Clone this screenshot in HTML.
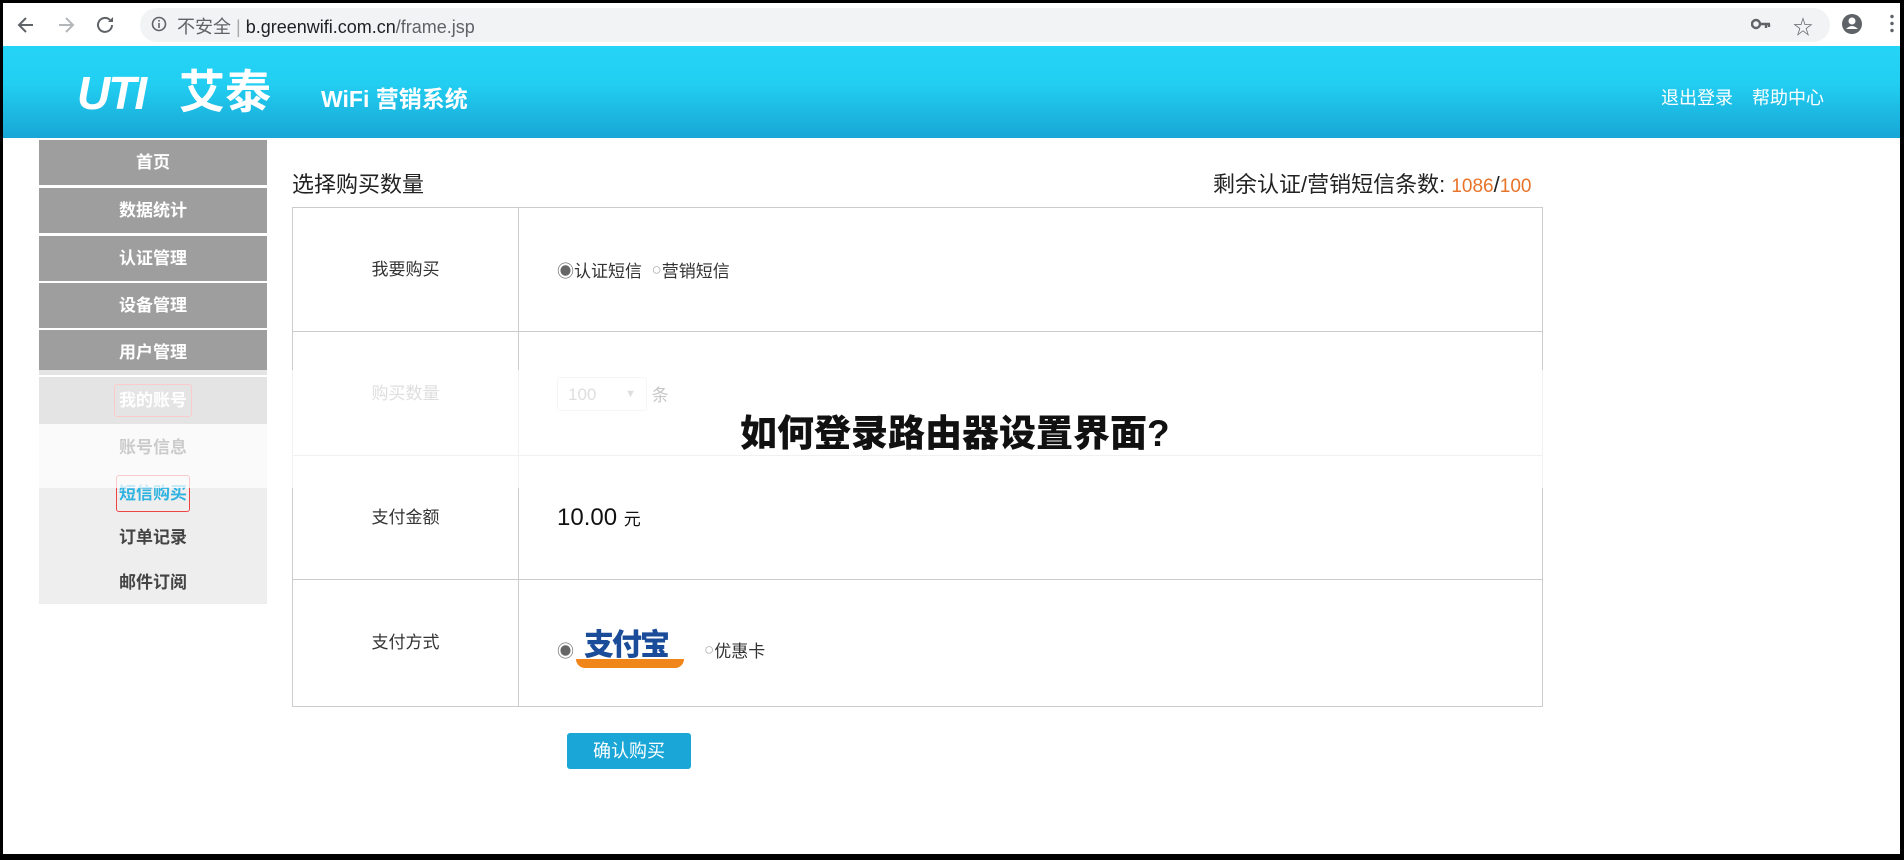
<!DOCTYPE html>
<html><head><meta charset="utf-8"><style>
*{margin:0;padding:0;box-sizing:border-box}
body{width:1904px;height:860px;overflow:hidden;background:#000;font-family:"Liberation Sans","Noto Sans CJK SC",sans-serif;position:relative}
#win{position:absolute;left:3px;top:3px;width:1897px;height:851px;background:#fff;overflow:hidden}
.abs{position:absolute}
#bar{left:0;top:0;width:1897px;height:43px;background:#fff}
#url{left:137px;top:5px;width:1690px;height:34px;border-radius:17px;background:#f1f3f4}
#hdr{left:0;top:43px;width:1897px;height:92px;background:linear-gradient(#24d4f6 0%,#22cff2 40%,#18a6d6 100%)}
.side{position:absolute;left:36px;width:228px;height:45px;background:#9e9e9e;color:#fff;font-weight:bold;font-size:17px;text-align:center;line-height:45px}
.sub{position:absolute;left:36px;width:228px;height:45px;color:#444;font-weight:bold;font-size:17px;text-align:center;line-height:45px}
.row{position:absolute;left:289px;width:1251px;height:125px;border:1px solid #ccc;font-size:17px;color:#333}
.lab{position:absolute;left:0;top:0;width:226px;height:123px;border-right:1px solid #ccc;text-align:center;line-height:123px}
.val{position:absolute;left:264px;top:0;height:123px;display:flex;align-items:center}
</style></head><body>
<div id="win">
<div id="bar" class="abs">
 <svg class="abs" style="left:14px;top:11px" width="110" height="22" viewBox="0 0 110 22"><path d="M16 11H3M9 4L2 11l7 7" stroke="#5f6368" stroke-width="2" fill="none"/><path d="M42 11h13M49 4l7 7-7 7" stroke="#b4b7ba" stroke-width="2" fill="none"/><path d="M93 6a7 7 0 1 0 2 5" stroke="#5f6368" stroke-width="2" fill="none"/><path d="M96 3v5h-5z" fill="#5f6368"/></svg>
 <div id="url" class="abs"></div>
 <svg class="abs" style="left:148px;top:13px" width="16" height="16"><circle cx="8" cy="8" r="6.5" stroke="#5f6368" stroke-width="1.6" fill="none"/><rect x="7.2" y="7" width="1.6" height="5" fill="#5f6368"/><rect x="7.2" y="4" width="1.6" height="1.6" fill="#5f6368"/></svg>
 <div class="abs" style="left:174px;top:10px;font-size:18px;color:#5f6368">不安全 <span style="color:#aaa">|</span> <span style="color:#202124">b.greenwifi.com.cn</span>/frame.jsp</div>
 <svg class="abs" style="left:1748px;top:15px" width="20" height="12"><circle cx="5" cy="6" r="4" stroke="#5f6368" stroke-width="2.4" fill="none"/><path d="M9 6h10M15 6v4M18 6v3" stroke="#5f6368" stroke-width="2.4"/></svg>
 <div class="abs" style="left:1790px;top:8px;font-size:20px;color:#5f6368">☆</div>
 <svg class="abs" style="left:1838px;top:10px" width="22" height="22"><circle cx="11" cy="11" r="10" fill="#5f6368"/><circle cx="11" cy="8" r="3.5" fill="#fff"/><path d="M5 16q6-6 12 0" fill="#fff"/></svg>
 <div class="abs" style="left:1887px;top:10px;width:4px;height:20px;background:radial-gradient(circle,#5f6368 1.5px,transparent 2px) 0 0/4px 7px"></div>
</div>
<div id="hdr" class="abs">
 <div class="abs" style="left:74px;top:24px;font-size:46px;font-weight:900;color:#fff;font-style:italic;letter-spacing:-2px;line-height:46px">UTI</div>
 <div class="abs" style="left:176px;top:22px;font-size:46px;font-weight:bold;color:#fff;line-height:48px">艾泰</div>
 <div class="abs" style="left:318px;top:34px;font-size:23px;font-weight:bold;color:#fff">WiFi 营销系统</div>
 <div class="abs" style="left:1658px;top:38px;font-size:18px;color:#fff">退出登录</div>
 <div class="abs" style="left:1749px;top:38px;font-size:18px;color:#fff">帮助中心</div>
</div>
<div class="side" style="top:137px">首页</div>
<div class="side" style="top:185px">数据统计</div>
<div class="side" style="top:233px">认证管理</div>
<div class="side" style="top:280px">设备管理</div>
<div class="side" style="top:327px">用户管理</div>
<div class="side" style="top:374px;height:47px;line-height:47px;background:#9e9e9e"><span style="border:1px solid #e44;border-radius:3px;padding:6px 4px">我的账号</span></div>
<div class="abs" style="left:36px;top:421px;width:228px;height:180px;background:#eee"></div>
<div class="sub" style="top:422px">账号信息</div>
<div class="sub" style="top:468px;color:#2fb3e0"><span style="border:1px solid #e44;border-radius:3px;padding:8px 2px">短信购买</span></div>
<div class="sub" style="top:512px">订单记录</div>
<div class="sub" style="top:557px">邮件订阅</div>
<div class="abs" style="left:289px;top:164px;font-size:22px;color:#222">选择购买数量</div>
<div class="abs" style="left:1210px;top:164px;font-size:22px;color:#222">剩余认证/营销短信条数: <span style="color:#e8742a;font-size:19px">1086</span>/<span style="color:#e8742a;font-size:19px">100</span></div>
<div class="row" style="top:204px"><div class="lab">我要购买</div><div class="val"><span style="color:#666">◉</span>认证短信&nbsp;&nbsp;<span style="color:#aaa">○</span>营销短信</div></div>
<div class="row" style="top:328px"><div class="lab" style="color:#888">购买数量</div><div class="val"><span style="display:inline-block;width:90px;height:34px;border:1px solid #ddd;border-radius:3px;color:#888;padding:7px 10px;font-size:17px">100 <span style="float:right;font-size:11px;margin-top:3px">▼</span></span>&nbsp;条</div></div>
<div class="row" style="top:452px"><div class="lab">支付金额</div><div class="val" style="font-size:24px;color:#111">10.00&nbsp;<span style="font-size:17px">元</span></div></div>
<div class="row" style="top:576px;height:128px"><div class="lab" style="height:126px;line-height:126px">支付方式</div><div class="val" style="top:8px"><span style="color:#666">◉</span><span style="display:inline-block;width:110px;height:46px;position:relative;margin-right:20px"><span style="position:absolute;left:10px;top:0;font-size:30px;font-weight:900;color:#1a4c9a;letter-spacing:-2px;line-height:38px">支付宝</span><span style="position:absolute;left:2px;top:32px;width:108px;height:9px;background:#f08519;border-radius:0 0 40px 40px"></span></span><span style="color:#aaa">○</span>优惠卡</div></div>
<div class="abs" style="left:564px;top:730px;width:124px;height:36px;background:#1aa6d6;border-radius:3px;color:#fff;font-size:18px;text-align:center;line-height:36px">确认购买</div>
<div class="abs" style="left:-3px;top:367px;width:1904px;height:118px;background:rgba(255,255,255,.72)"></div>
<div class="abs" style="left:737px;top:400px;font-size:37px;font-weight:900;color:#111">如何登录路由器设置界面?</div>
</div>
</body></html>
